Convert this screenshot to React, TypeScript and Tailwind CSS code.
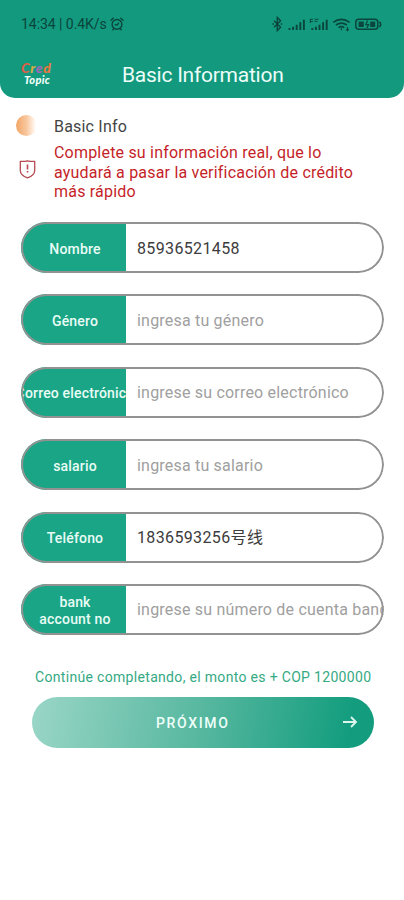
import type { ReactNode } from "react";

type FieldProps = { label: ReactNode; value?: string; placeholder?: string; textWidth: string };

const fields: FieldProps[] = [
  { label: "Nombre", value: "85936521458", textWidth: "tracking-[0.36px]" },
  { label: "Género", placeholder: "ingresa tu género", textWidth: "tracking-[0.2px]" },
  { label: "Correo electrónico", placeholder: "ingrese su correo electrónico", textWidth: "tracking-[0.2px]" },
  { label: "salario", placeholder: "ingresa tu salario", textWidth: "tracking-[0.2px]" },
  { label: "Teléfono", value: "1836593256号线", textWidth: "tracking-[0.36px]" },
  {
    label: (
      <>
        bank
        <br />
        account no
      </>
    ),
    placeholder: "ingrese su número de cuenta bancaria",
    textWidth: "tracking-[0.2px]",
  },
];

function Field({ label, value, placeholder, textWidth }: FieldProps) {
  return (
    <div className="relative flex h-[51px] w-[363px] overflow-hidden rounded-full bg-white after:pointer-events-none after:absolute after:inset-0 after:rounded-full after:border-2 after:border-[#929292]">
      <div className="flex w-[105px] shrink-0 items-center justify-center overflow-hidden whitespace-nowrap bg-[#1aa686] pl-[3px] pt-[3px] text-center text-[14px] font-medium leading-[17px] tracking-[0.18px] text-[#e9fbf5]">
        <span className="shrink-0">{label}</span>
      </div>
      <div
        className={`flex items-center whitespace-nowrap pl-[11px] pt-[2px] text-[16px] ${textWidth} ${
          value ? "text-[#3c3c3c]" : "text-[#a0a0a0]"
        }`}
      >
        {value ?? placeholder}
      </div>
    </div>
  );
}

function AlarmIcon() {
  return (
    <svg width="14" height="14" viewBox="0 0 14 14" fill="none" stroke="currentColor" strokeWidth="1.4" strokeLinecap="round">
      <circle cx="7" cy="7.4" r="4.9" />
      <path d="M1 3.2 3.2 1.2M13 3.2 10.8 1.2M2.8 12.8l1-1M11.2 12.8l-1-1M5.4 7.8h2.1l1-1.6" />
    </svg>
  );
}

function StatusIcons() {
  return (
    <svg className="overflow-visible" width="112" height="18" viewBox="0 0 112 18" fill="none" stroke="currentColor">
      <path d="m0 5.7 6.6 6.6-3.3 3.2V2.5l3.3 3.2L0 12.3" strokeWidth="1.4" />
      <path d="M-1.6 9h1.5M6.7 9h1.5" strokeWidth="1.4" />
      <path d="M15.5 15v-2M19.1 15v-3.2M22.7 15V9.7M26.3 15V7.2M29.9 15V4.7" strokeWidth="1.9" />
      <path d="M38.3 15v-2M41.9 15v-3.2M45.5 15V9.7M49.1 15V7.2M52.7 15V4.7" strokeWidth="1.9" />
      <path d="M36 4.3h3M36 6.5h3M36.3 4v4M40.5 4.3h4M40.5 6.4h3" strokeWidth="0.9" />
      <path d="M59.2 7.4q8.2-6 16.4 0M61.9 10q5.5-3.8 11 0M64.6 12.6q2.8-2 5.6 0" strokeWidth="1.6" />
      <path d="M67.4 13.2v2M73.5 12v3.5m-1.2-1.2 1.2 1.3 1.2-1.3" strokeWidth="1.2" />
      <rect x="81.8" y="4.2" width="22" height="10" rx="3" strokeWidth="1.5" />
      <path d="M105.4 6.7q2.6 2.6 0 5.2" strokeWidth="1.6" />
      <rect x="84.6" y="6.6" width="5.2" height="5.4" fill="currentColor" stroke="none" />
      <rect x="96.2" y="6.6" width="5" height="5.4" fill="currentColor" stroke="none" />
      <path d="m93.6 5.6-1.8 4h2.8l-1.7 3.5" strokeWidth="1.2" />
    </svg>
  );
}

export default function App() {
  return (
    <div className="flex h-[900px] w-[404px] flex-col overflow-hidden bg-white font-[Roboto,'Noto_Sans_CJK_SC',sans-serif]">
      <header className="flex h-[98px] shrink-0 flex-col rounded-b-[15px] bg-[#12997e] pt-[15px]">
        <div className="flex h-[18px] items-center text-[#0b453c]">
          <span className="ml-[21px] w-[86px] whitespace-nowrap text-[14px] tracking-[-0.05px]">14:34 | 0.4K/s</span>
          <span className="ml-[3px]"><AlarmIcon /></span>
          <span className="ml-auto mr-[18px]"><StatusIcons /></span>
        </div>
        <div className="mt-[24px] flex h-[36px] items-center">
          <div className="ml-[21px] flex w-[32px] flex-col pb-[2px] font-[Lato,sans-serif] font-black italic">
            <div className="h-[12px] whitespace-nowrap text-[14px] leading-[12px] tracking-[0.6px]">
              <span className="text-[#dd6148]">C</span>
              <span className="text-[#d4ad45]">r</span>
              <span className="text-[#a367b8]">e</span>
              <span className="text-[#e6783d]">d</span>
            </div>
            <div className="ml-[3px] h-[12px] text-[11px] leading-[11px] tracking-[0.3px] text-[#effff9]">Topic</div>
          </div>
          <h1 className="ml-[69px] whitespace-nowrap pt-px text-[21px] tracking-[-0.25px] text-[#ecfdf8]">Basic Information</h1>
        </div>
      </header>

      <main className="flex flex-col">
        <div className="mt-[17px] flex h-[24px] items-center">
          <span className="ml-[16px] mb-[4px] size-[21px] rounded-full bg-linear-to-r from-[#f2a565] via-[#f8c79e] via-50% to-white to-95%" />
          <span className="ml-[17px] text-[16px] tracking-[0.2px] text-[#444]">Basic Info</span>
        </div>
        <div className="mt-[4px] flex">
          <svg className="ml-[19px] mt-[17px] shrink-0" width="17" height="19" viewBox="0 0 17 19" fill="none" stroke="#b64b52" strokeWidth="1.3" strokeLinejoin="round">
            <path d="M1.3 1.3Q5 1.7 8.5.8q3.5.9 7.2.5v9.2c0 3.8-3.5 6-7.2 7.3-3.7-1.3-7.2-3.5-7.2-7.3Z" />
            <path d="M8.5 4.5v5M8.5 11v1.6" strokeWidth="1.6" />
          </svg>
          <p className="ml-[18px] whitespace-nowrap text-[16px] leading-[19.5px] tracking-[0.2px] text-[#c51f29]">
            Complete su información real, que lo
            <br />
            ayudará a pasar la verificación de crédito
            <br />
            más rápido
          </p>
        </div>

        <div className="ml-[21px] mt-[20.5px] flex flex-col gap-[21.4px]">
          {fields.map((field, index) => (
            <Field key={index} {...field} />
          ))}
        </div>

        <p className="ml-[35px] mt-[33px] whitespace-nowrap text-[14px] leading-[18px] tracking-[0.32px] text-[#35a983]">
          Continúe completando, el monto es + COP 1200000
        </p>
        <button className="ml-[32px] mt-[11px] flex h-[51px] w-[342px] items-center rounded-full bg-[linear-gradient(100deg,#9ad6c7_0%,#56b79f_50%,#139d7e_92%)]">
          <span className="ml-[124px] pt-[2px] text-[14px] font-medium tracking-[1.65px] text-[#effff9]">PRÓXIMO</span>
          <svg className="ml-auto mr-[16px]" width="16" height="14" viewBox="0 0 16 14" fill="none" stroke="#ddf5ed" strokeWidth="1.8">
            <path d="M1 7h13M9 2l5 5-5 5" />
          </svg>
        </button>
      </main>
    </div>
  );
}
